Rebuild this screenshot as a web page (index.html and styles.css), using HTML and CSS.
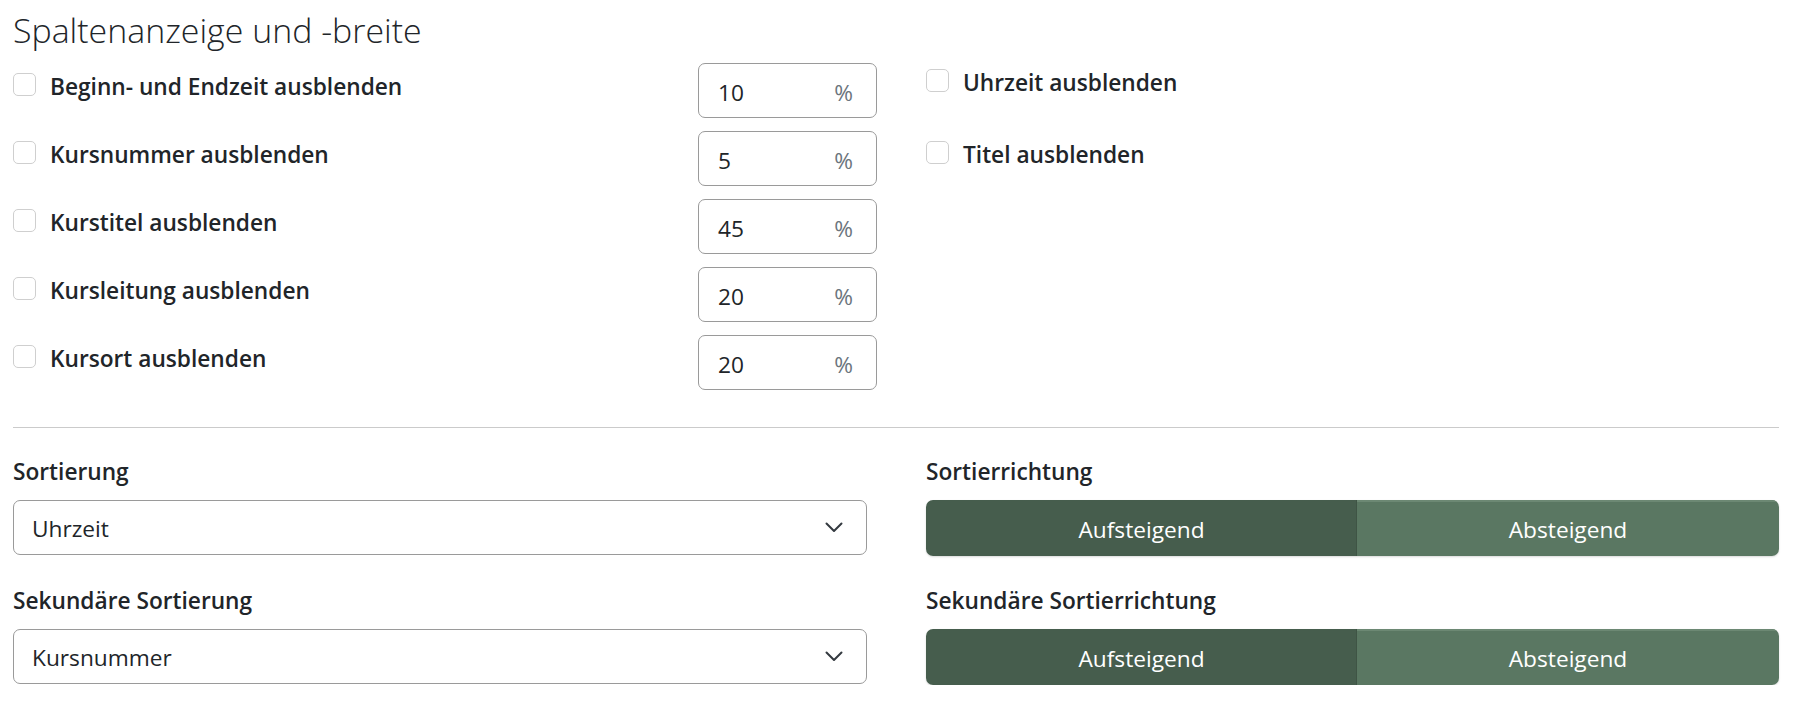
FILE: index.html
```html
<!DOCTYPE html>
<html lang="de">
<head>
<meta charset="utf-8">
<title>Spaltenanzeige und -breite</title>
<link rel="stylesheet" href="styles.css">
</head>
<body>
<h3 class="title">Spaltenanzeige und -breite</h3>

<section class="columns">
  <div class="col-left">
    <div class="width-row">
      <label class="check"><span class="box"></span><span class="check-text">Beginn- und Endzeit ausblenden</span></label>
      <div class="pct-input"><span class="val">10</span><span class="unit">%</span></div>
    </div>
    <div class="width-row">
      <label class="check"><span class="box"></span><span class="check-text">Kursnummer ausblenden</span></label>
      <div class="pct-input"><span class="val">5</span><span class="unit">%</span></div>
    </div>
    <div class="width-row">
      <label class="check"><span class="box"></span><span class="check-text">Kurstitel ausblenden</span></label>
      <div class="pct-input"><span class="val">45</span><span class="unit">%</span></div>
    </div>
    <div class="width-row">
      <label class="check"><span class="box"></span><span class="check-text">Kursleitung ausblenden</span></label>
      <div class="pct-input"><span class="val">20</span><span class="unit">%</span></div>
    </div>
    <div class="width-row">
      <label class="check"><span class="box"></span><span class="check-text">Kursort ausblenden</span></label>
      <div class="pct-input"><span class="val">20</span><span class="unit">%</span></div>
    </div>
  </div>
  <div class="col-right">
    <label class="check"><span class="box"></span><span class="check-text">Uhrzeit ausblenden</span></label>
    <label class="check"><span class="box"></span><span class="check-text">Titel ausblenden</span></label>
  </div>
</section>

<hr class="divider">

<section class="sorting">
  <div class="field">
    <div class="field-label">Sortierung</div>
    <div class="select"><span>Uhrzeit</span>
      <svg class="chev" viewBox="0 0 18 11" width="18" height="11"><polyline points="1.5,1.5 9,9 16.5,1.5" fill="none" stroke="#343a40" stroke-width="2" stroke-linecap="round" stroke-linejoin="round"/></svg>
    </div>
  </div>
  <div class="field">
    <div class="field-label">Sortierrichtung</div>
    <div class="toggle"><span class="opt active">Aufsteigend</span><span class="opt">Absteigend</span></div>
  </div>
  <div class="field">
    <div class="field-label">Sekundäre Sortierung</div>
    <div class="select"><span>Kursnummer</span>
      <svg class="chev" viewBox="0 0 18 11" width="18" height="11"><polyline points="1.5,1.5 9,9 16.5,1.5" fill="none" stroke="#343a40" stroke-width="2" stroke-linecap="round" stroke-linejoin="round"/></svg>
    </div>
  </div>
  <div class="field">
    <div class="field-label">Sekundäre Sortierrichtung</div>
    <div class="toggle"><span class="opt active">Aufsteigend</span><span class="opt">Absteigend</span></div>
  </div>
</section>
</body>
</html>
```

FILE: styles.css
```css
* { box-sizing: border-box; }

body {
  margin: 0;
  padding: 0 20px 0 13px;
  font-family: "Open Sans", "Noto Sans", sans-serif;
  font-size: 22.7px;
  color: #212529;
  background: #fff;
}

.title {
  margin: 0;
  padding-top: 10px;
  font-size: 33.9px;
  font-weight: 300;
  line-height: 40px;
}

.columns {
  display: flex;
  margin-top: 13px;
}

.col-left {
  width: 864px;
  display: flex;
  flex-direction: column;
  gap: 13px;
}

.width-row {
  display: flex;
  height: 55px;
}

.width-row .check {
  flex: 1;
  margin-top: 10px;
}

.check {
  display: flex;
  align-items: center;
  height: 23px;
  font-weight: 600;
  line-height: 23px;
}

.check-text {
  margin-top: 4px;
  white-space: nowrap;
}

.box {
  width: 23px;
  height: 23px;
  border: 1px solid #cfcfcf;
  border-radius: 5px;
  background: #fff;
  flex: none;
  margin-right: 14px;
}

.pct-input {
  width: 179px;
  height: 55px;
  border: 1px solid #9a9a9a;
  border-radius: 7px;
  display: flex;
  align-items: center;
  justify-content: space-between;
  padding: 3px 23px 0 19px;
}

.unit { color: #6c757d; }

.col-right {
  margin-left: 49px;
  padding-top: 6px;
  display: flex;
  flex-direction: column;
  gap: 49px;
}

.divider {
  margin: 37px 0 0;
  border: 0;
  border-top: 1px solid #cbcbcb;
  height: 0;
}

.sorting {
  display: grid;
  grid-template-columns: 854px 1fr;
  column-gap: 59px;
  row-gap: 28px;
  margin-top: 27px;
}

.field-label {
  font-weight: 600;
  line-height: 33px;
  margin-bottom: 12px;
}

.select {
  height: 55px;
  border: 1px solid #9a9a9a;
  border-radius: 7px;
  display: flex;
  align-items: center;
  justify-content: space-between;
  padding: 2px 23px 0 18px;
}

.chev { display: block; margin-top: -2px; }

.toggle {
  display: flex;
  height: 56px;
  border-radius: 7px;
  overflow: hidden;
  box-shadow: 0 1px 2px rgba(0,0,0,0.15);
}

.opt {
  flex: 1;
  display: flex;
  align-items: center;
  justify-content: center;
  padding-top: 2px;
  color: #fff;
  background: #5a7762;
  box-shadow: inset 0 2px 0 #6c8873;
}

.opt.active {
  background: #465d4d;
  box-shadow: inset -1px 0 0 #3f5445;
  flex: 0 0 431px;
}
```
